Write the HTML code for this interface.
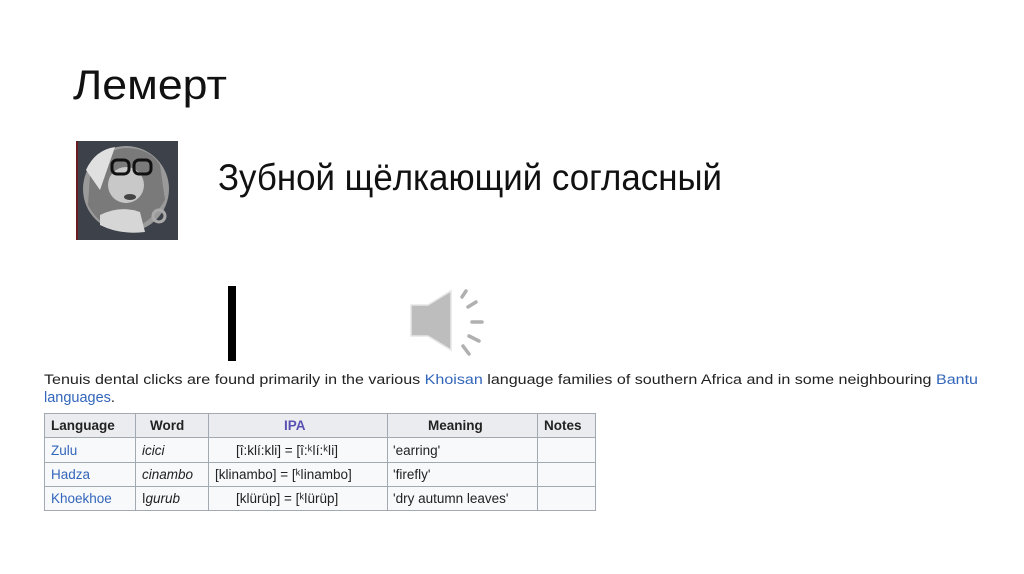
<!DOCTYPE html>
<html><head><meta charset="utf-8"><style>
html,body{margin:0;padding:0;background:#fff;}
svg{display:block}
</style></head><body>
<svg width="1024" height="574" viewBox="0 0 1024 574" xmlns="http://www.w3.org/2000/svg">
<rect width="1024" height="574" fill="#fff"/>
<text x="73" y="99" font-family="Liberation Sans, sans-serif" font-size="42" fill="#111" textLength="154" lengthAdjust="spacingAndGlyphs">Лемерт</text>
<text x="218" y="190" font-family="Liberation Sans, sans-serif" font-size="37" fill="#111" textLength="504" lengthAdjust="spacingAndGlyphs">Зубной щёлкающий согласный</text>
<!-- avatar -->
<rect x="76" y="141" width="102" height="99" fill="#3d4149"/>
<rect x="76" y="141" width="2" height="99" fill="#6a1a20"/>
<circle cx="126" cy="189" r="43" fill="#9a9a9a"/>
<path d="M90 175 Q100 150 125 148 Q150 148 160 165 L165 200 Q150 225 125 232 Q100 228 88 205Z" fill="#7a7a7a"/>
<circle cx="126" cy="185" r="18" fill="#c8c8c8"/>
<path d="M86 170 Q95 150 115 147 L100 190 Z" fill="#e0e0e0"/>
<rect x="112" y="160" width="17" height="14" rx="5" fill="none" stroke="#111" stroke-width="3"/>
<rect x="134" y="160" width="17" height="14" rx="5" fill="none" stroke="#111" stroke-width="3"/>
<ellipse cx="130" cy="197" rx="6" ry="3" fill="#444"/>
<path d="M100 215 Q120 205 140 212 L145 232 Q120 235 100 225Z" fill="#d6d6d6"/>
<circle cx="159" cy="216" r="6" fill="none" stroke="#aaa" stroke-width="3"/>
<!-- bar -->
<rect x="228" y="286" width="8" height="75" fill="#000"/>
<!-- speaker -->
<g fill="#bdbdbd" stroke="#e6e6e6" stroke-width="1.5">
<path d="M411 305 L428 305 L451 291 L451 350 L428 336 L411 336 Z"/>
</g>
<g stroke="#b0b0b0" stroke-width="3.5" stroke-linecap="round" fill="none">
<line x1="462" y1="297" x2="466" y2="291"/>
<line x1="468" y1="307" x2="476" y2="302"/>
<line x1="472" y1="322" x2="482" y2="322"/>
<line x1="469" y1="336" x2="479" y2="341"/>
<line x1="463" y1="346" x2="469" y2="354"/>
</g>
<!-- paragraph -->
<g font-family="Liberation Sans, sans-serif" font-size="13.5" fill="#222">
<text x="44" y="384" textLength="934" lengthAdjust="spacingAndGlyphs">Tenuis dental clicks are found primarily in the various <tspan fill="#3366bb">Khoisan</tspan> language families of southern Africa and in some neighbouring <tspan fill="#3366bb">Bantu</tspan></text>
<text x="44" y="402" fill="#3366bb" font-size="14.5">languages<tspan fill="#222">.</tspan></text>
</g>
<!-- table -->
<rect x="44.5" y="413.5" width="551" height="97" fill="#f8f9fa" stroke="#a2a9b1"/>
<rect x="45" y="414" width="550" height="24" fill="#eaecf0"/>
<g stroke="#a2a9b1" stroke-width="1">
<line x1="44" y1="437.5" x2="596" y2="437.5"/>
<line x1="44" y1="462.5" x2="596" y2="462.5"/>
<line x1="44" y1="486.5" x2="596" y2="486.5"/>
<line x1="135.5" y1="413" x2="135.5" y2="511"/>
<line x1="208.5" y1="413" x2="208.5" y2="511"/>
<line x1="387.5" y1="413" x2="387.5" y2="511"/>
<line x1="537.5" y1="413" x2="537.5" y2="511"/>
</g>
<g font-family="Liberation Sans, sans-serif" font-size="13.5" fill="#222">
<text x="51" y="430" font-weight="bold">Language</text>
<text x="150" y="430" font-weight="bold">Word</text>
<text x="284" y="430" font-weight="bold" fill="#5a4fb3">IPA</text>
<text x="428" y="430" font-weight="bold">Meaning</text>
<text x="544" y="430" font-weight="bold">Notes</text>
<text x="51" y="455" fill="#3366bb">Zulu</text>
<text x="51" y="479" fill="#3366bb">Hadza</text>
<text x="51" y="503" fill="#3366bb">Khoekhoe</text>
<text x="142" y="455" font-style="italic">icici</text>
<text x="142" y="479" font-style="italic">cinambo</text>
<text x="142" y="503">ǀ<tspan font-style="italic">gurub</tspan></text>
<text x="236" y="455">[î:klí:kli] = [î:ᵏǀí:ᵏǀi]</text>
<text x="215" y="479">[klinambo] = [ᵏǀinambo]</text>
<text x="236" y="503">[klürüp] = [ᵏǀürüp]</text>
<text x="393" y="455">'earring'</text>
<text x="393" y="479">'firefly'</text>
<text x="393" y="503">'dry autumn leaves'</text>
</g>
</svg>
</body></html>
